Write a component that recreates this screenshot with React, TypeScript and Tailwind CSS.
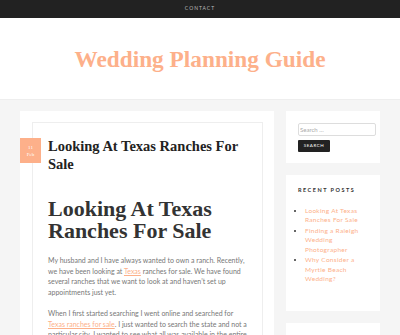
import React from "react";

const serif = "font-['Liberation_Serif',serif]";
const sans = "font-['Lato',sans-serif]";

function RecentPosts() {
    const posts = ["Looking At Texas Ranches For Sale", "Finding a Raleigh Wedding Photographer", "Why Consider a Myrtle Beach Wedding?"];
    return (
        <div className="bg-white px-[12px] pt-[11px] pb-[26px]">
            <h3 className={`${sans} text-[5.5px] font-bold tracking-[1.5px] text-[#333] leading-[8px]`}>RECENT POSTS</h3>
            <ul className="mt-[12px] pl-[7px] list-disc marker:text-[#333] text-[6.5px] leading-[9.3px]">
                {posts.map((p) => (
                    <li key={p} className={`${sans} text-[#fdb08a] w-[56px] tracking-[0.3px] mb-[1.5px]`}>{p}</li>
                ))}
            </ul>
        </div>
    );
}

export default function App() {
    return (
        <div className="bg-[#f5f5f5] overflow-hidden h-[335px]">
            <nav className="h-[18px] bg-[#222] flex items-center justify-center">
                <span className={`${sans} text-[5px] tracking-[1px] text-[#bbb]`}>CONTACT</span>
            </nav>
            <header className="h-[82px] bg-white border-b border-[#eee] flex items-center justify-center">
                <h1 className={`${serif} text-[23.3px] font-bold text-[#fdb08a] mt-[2px]`}>Wedding Planning Guide</h1>
            </header>
            <main className="flex gap-[12px] px-[20px] pt-[11px] items-start">
                <article className="relative w-[254px] bg-white pl-[12px] pr-[11px] pt-[11px] h-[240px]">
                    <div className={`${serif} absolute left-0 top-[27px] w-[21px] h-[25px] bg-[#fdb08a] text-white flex flex-col items-center justify-center text-[5px] leading-[7px]`}>
                        <span>11</span>
                        <span>Feb</span>
                    </div>
                    <div className="border border-[#eee] border-b-0 pl-[15px] pr-[12px] pt-[14px] h-full">
                        <h2 className={`${serif} text-[14.5px] font-bold text-[#222] leading-[18px]`}>Looking At Texas Ranches For Sale</h2>
                        <h1 className={`${serif} text-[22px] font-bold text-[#333] leading-[22px] mt-[25px]`}>Looking At Texas Ranches For Sale</h1>
                        <div className="w-[200px]">
                            <p className={`${sans} text-[7px] leading-[10.7px] text-[#777] mt-[13px]`}>
                                My husband and I have always wanted to own a ranch. Recently, we have been looking at <a className="text-[#fdb08a] underline">Texas</a> ranches for sale. We have found several ranches that we want to look at and haven’t set up appointments just yet.
                            </p>
                            <p className={`${sans} text-[7px] leading-[10.7px] text-[#777] mt-[10px]`}>
                                When I first started searching I went online and searched for <a className="text-[#fdb08a] underline">Texas ranches for sale</a>. I just wanted to search the state and not a particular city. I wanted to see what all was available in the entire state.
                            </p>
                        </div>
                    </div>
                </article>
                <aside className="w-[94px] flex flex-col gap-[12px]">
                    <div className="bg-white px-[12px] pt-[12px] pb-[11px]">
                        <input
                            placeholder="Search …"
                            className={`${sans} block w-[78px] h-[13px] border border-[#ddd] rounded-[2px] text-[6px] px-[1px] placeholder:text-[#aaa] outline-none`}
                        />
                        <button className={`${sans} block mt-[4px] w-[32px] h-[12px] bg-[#222] text-white text-[4.5px] leading-[12px] tracking-[0.5px] rounded-[1px] text-center`}>SEARCH</button>
                    </div>
                    <RecentPosts />
                    <div className="bg-white px-[12px] pt-[10px] h-[40px]">
                        <h3 className={`${sans} text-[5.5px] font-bold tracking-[1.5px] text-[#333] leading-[8px]`}>ARCHIVES</h3>
                    </div>
                </aside>
            </main>
        </div>
    );
}
